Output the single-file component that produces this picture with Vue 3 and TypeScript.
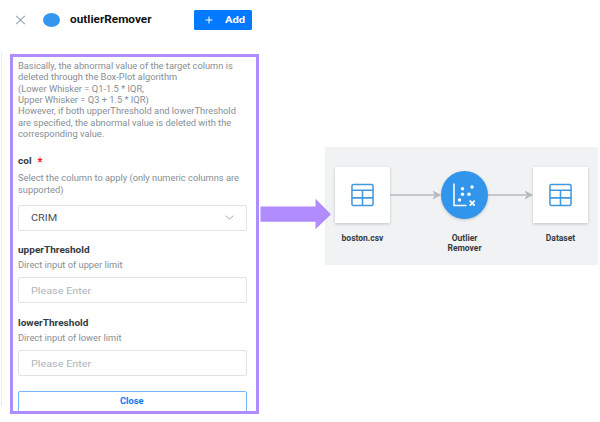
<script setup lang="ts">
interface Field {
  name: string
  hint: string
}

const description: string[] = [
  'Basically, the abnormal value of the target column is',
  'deleted through the Box-Plot algorithm',
  '(Lower Whisker = Q1-1.5 * IQR,',
  'Upper Whisker = Q3 + 1.5 * IQR)',
  'However, if both upperThreshold and lowerThreshold',
  'are specified, the abnormal value is deleted with the',
  'corresponding value.',
]

const fields: Field[] = [
  { name: 'upperThreshold', hint: 'Direct input of upper limit' },
  { name: 'lowerThreshold', hint: 'Direct input of lower limit' },
]
</script>

<template>
  <main class="page">
    <aside class="sidebar">
      <header class="header">
        <svg class="dismiss" viewBox="0 0 10 10"><path d="M.6 .9 9.4 9.1M9.4 .9.6 9.1" /></svg>
        <i class="dot"></i>
        <h1 class="title"><span class="wide">outlierRemover</span></h1>
        <button class="add">
          <svg viewBox="0 0 8 8"><path d="M4 .5v7M.5 4h7" /></svg>
          <span class="wide">Add</span>
        </button>
      </header>

      <div class="body">
        <section class="panel">
          <div class="muted intro">
            <div v-for="line in description" :key="line" class="wide">{{ line }}</div>
          </div>

          <div class="label first"><span class="wide">col</span><svg class="star" viewBox="0 0 6 6"><path d="M3 3V.6M3 3 .7 2.300M3 3l2.300-.7M3 3 1.500 5.100M3 3l1.500 2.100" /></svg></div>
          <div class="muted choose">
            <div class="wide">Select the column to apply (only numeric columns are</div>
            <div class="wide">supported)</div>
          </div>
          <div class="control select">
            <span class="wide">CRIM</span>
            <svg viewBox="0 0 9 5"><path d="M.7 .7 4.5 4 8.3.7" /></svg>
          </div>

          <div v-for="field in fields" :key="field.name" class="field">
            <div class="label"><span class="wide">{{ field.name }}</span></div>
            <div class="muted hint"><span class="wide">{{ field.hint }}</span></div>
            <div class="control placeholder"><span class="wide">Please Enter</span></div>
          </div>

          <button class="close"><span class="wide">Close</span></button>
        </section>
      </div>
    </aside>

    <svg class="pointer" viewBox="0 0 72 32"><path d="M1.500 8.4h55V.8L72 16.200 56.500 31.300v-7.600h-55z" /></svg>

    <section class="flow">
      <div class="node">
        <div class="tile">
          <svg class="table" viewBox="0 0 24 24"><rect x="1" y="1" width="22" height="22" rx="1.5" /><path d="M1 7h22M1 15h22M12 7v16" /></svg>
        </div>
        <div class="caption">boston.csv</div>
      </div>
      <svg class="link first-link" viewBox="0 0 52 12"><path class="line" d="M0 6h45" /><path class="head" d="M43.500 1.500 52 6l-8.500 4.500 2-4.500z" /></svg>
      <div class="node mid">
        <div class="disc">
          <svg viewBox="0 0 47 48">
            <path class="axis" d="M13 12.500v22h12.500" />
            <g class="points">
              <circle cx="21.500" cy="17.800" r="1.700" /><circle cx="31" cy="16" r="1.700" />
              <circle cx="21.500" cy="23.200" r="1.700" /><circle cx="28" cy="23.200" r="1.700" />
              <circle cx="18.500" cy="29" r="1.700" />
            </g>
            <path class="cross" d="m28.700 29.600 5 5m0-5-5 5" />
          </svg>
        </div>
        <div class="caption">Outlier<br />Remover</div>
      </div>
      <svg class="link second-link" viewBox="0 0 46 12"><path class="line" d="M0 6h39" /><path class="head" d="M37.500 1.500 46 6l-8.500 4.500 2-4.500z" /></svg>
      <div class="node">
        <div class="tile">
          <svg class="table" viewBox="0 0 24 24"><rect x="1" y="1" width="22" height="22" rx="1.5" /><path d="M1 7h22M1 15h22M12 7v16" /></svg>
        </div>
        <div class="caption">Dataset</div>
      </div>
    </section>
  </main>
</template>

<style>
body {
  background: #fff;
}
</style>

<style scoped>
* {
  box-sizing: border-box;
}
.page {
  display: flex;
  align-items: flex-start;
  width: 600px;
  height: 422px;
  overflow: hidden;
  font-family: Roboto, sans-serif;
}
svg {
  display: block;
  flex: none;
  fill: none;
}
button {
  font-family: inherit;
}
.wide {
  display: block;
  width: max-content;
  white-space: nowrap;
  transform: scaleX(1.18);
  transform-origin: left center;
}
.sidebar {
  flex: none;
  width: 259px;
}
.header {
  display: flex;
  align-items: center;
  height: 39px;
  padding-left: 15px;
}
.dismiss {
  width: 11px;
  height: 10px;
  stroke: #98a4b0;
  stroke-width: 1.100;
}
.dot {
  width: 17px;
  height: 14px;
  margin-left: 17px;
  border-radius: 50%;
  background: #3497ed;
}
.title {
  width: 124px;
  margin: 0 0 0 10px;
  font-size: 10px;
  font-weight: 700;
  line-height: 14px;
  color: #111;
}
.add {
  display: flex;
  flex: none;
  align-items: center;
  width: 58px;
  height: 20px;
  padding: 0 0 0 11px;
  gap: 11.500px;
  border: 0;
  border-radius: 1.500px;
  background: #027aff;
  color: #fff;
  font-size: 9.500px;
  font-weight: 700;
}
.add svg {
  width: 8px;
  height: 8px;
  stroke: #fff;
}
.body {
  height: 353px;
  margin: 14px 0 0 1px;
  padding: 1px 0 0 8px;
  border-left: 1px solid #e9e6fa;
}
.panel {
  width: 249px;
  height: 360px;
  padding: 4px 0 0 4.500px;
  border: 3px solid #b18cff;
  overflow: hidden;
}
.muted {
  color: #868e96;
  font-size: 8.200px;
  line-height: 11.350px;
}
.muted .wide {
  transform: scaleX(1.136);
}
.label {
  display: flex;
  color: #343a40;
  font-size: 8.700px;
  font-weight: 700;
  line-height: 12px;
}
.label .wide {
  transform: scaleX(1.155);
}
.first {
  margin-top: 14.500px;
}
.star {
  width: 6px;
  height: 6px;
  margin: 2px 0 0 7.500px;
  stroke: #ff1515;
  stroke-width: 1.100;
}
.choose {
  margin-top: 6.500px;
}
.control {
  display: flex;
  align-items: center;
  width: 229px;
  height: 26px;
  padding: 0 12px;
  border: 1px solid #dfe3e8;
  border-radius: 2px;
  font-size: 9.200px;
}
.select {
  justify-content: space-between;
  margin-top: 8.500px;
  color: #495057;
}
.select svg {
  width: 9px;
  height: 5px;
  stroke: #a5adb5;
}
.field {
  height: 73px;
  padding-top: 13px;
}
.hint {
  margin-top: 4px;
}
.placeholder {
  margin-top: 6.500px;
  color: #adb5bd;
}
.close {
  display: flex;
  justify-content: center;
  width: 229px;
  height: 24px;
  margin-top: 14px;
  padding: 4.500px 0 0;
  border: 1px solid #74b4f8;
  border-radius: 2px;
  background: #fff;
  color: #0878f8;
  font-size: 8.500px;
  font-weight: 700;
  line-height: 11px;
}
.close .wide {
  transform: scaleX(1.1);
  transform-origin: center;
}
.pointer {
  position: relative;
  z-index: 1;
  width: 72px;
  height: 32px;
  margin-top: 198px;
  fill: #b18cff;
}
.flow {
  display: flex;
  flex: none;
  width: 273px;
  height: 118px;
  margin: 147px 0 0 -6px;
  padding: 20px 0 0 10px;
  background: #f1f2f4;
}
.node {
  width: 55px;
}
.mid {
  width: 47px;
  padding-top: 4px;
}
.tile {
  display: grid;
  place-items: center;
  width: 55px;
  height: 56px;
  background: #fff;
  box-shadow: 0 1px 3px #0003;
}
.table {
  width: 23px;
  height: 24px;
  stroke: #4298dc;
  stroke-width: 1.600;
}
.disc {
  width: 47px;
  height: 48px;
  border-radius: 50%;
  background: #3295ec;
  box-shadow: 0 1px 3px #0003;
}
.axis {
  stroke: #fff;
  stroke-width: 1.500;
}
.points {
  fill: #fff;
}
.cross {
  stroke: #fff;
  stroke-width: 1.800;
}
.caption {
  display: flex;
  justify-content: center;
  margin-top: 9.500px;
  color: #343a40;
  font-size: 8.500px;
  font-weight: 700;
  line-height: 10.500px;
  text-align: center;
  white-space: nowrap;
}
.mid .caption {
  display: block;
  margin-top: 13.500px;
}
.link {
  height: 12px;
  margin-top: 22px;
}
.first-link {
  width: 51px;
}
.second-link {
  width: 45px;
}
.line {
  stroke: #b4b9bf;
  stroke-width: 1.400;
}
.head {
  fill: #b4b9bf;
}
</style>
